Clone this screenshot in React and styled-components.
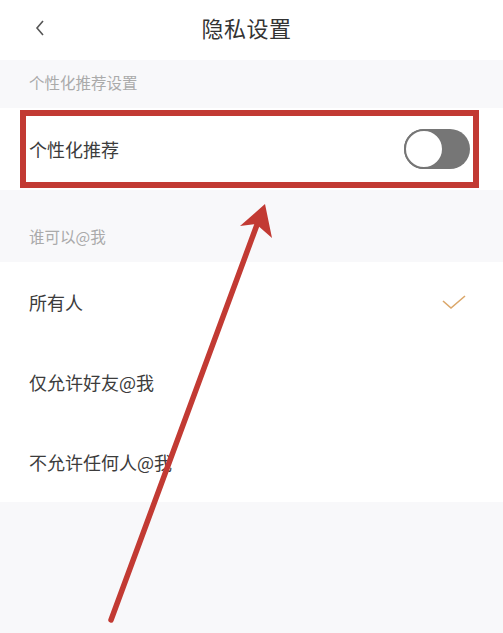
import styled, { createGlobalStyle } from 'styled-components';

const GlobalStyle = createGlobalStyle`
    html, body {
        margin: 0;
        padding: 0;
        background: #f8f8fa;
    }
    body {
        font-family: "Noto Sans CJK SC", "Noto Sans", sans-serif;
    }
`;

const Page = styled.div`
    position: relative;
    width: 503px;
    height: 633px;
    overflow: hidden;
    background: #f8f8fa;
`;

const Header = styled.header`
    height: 60px;
    background: #fff;
    display: flex;
    align-items: center;
    justify-content: center;
    position: relative;
`;

const BackButton = styled.div`
    position: absolute;
    left: 34px;
    top: 19px;
    width: 16px;
    height: 18px;
    display: flex;
    align-items: center;
`;

const Title = styled.h1`
    margin: -6px 10px 0 0;
    font-size: 22px;
    font-weight: 400;
    color: #333;
    letter-spacing: 0.5px;
`;

const SectionLabel = styled.div`
    height: ${({ $height }) => $height}px;
    box-sizing: border-box;
    display: flex;
    align-items: flex-end;
    padding: 0 29px 15px;
    font-size: 15.5px;
    color: #aaa;
`;

const List = styled.div`
    background: #fff;
`;

const Row = styled.div`
    height: ${({ $height }) => $height || 80}px;
    display: flex;
    align-items: center;
    justify-content: space-between;
    padding: 0 36px 0 29px;
    font-size: 18px;
    color: #3c3c3c;
    position: relative;
`;

const ToggleRow = styled(Row)`
    padding-right: 33px;
`;

const HighlightBox = styled.div`
    position: absolute;
    left: 20px;
    right: 24px;
    top: 2px;
    bottom: 2px;
    border: 6px solid #c23a33;
    pointer-events: none;
`;

const Toggle = styled.div`
    width: 66px;
    height: 40px;
    border-radius: 20px;
    background: #767676;
    position: relative;
`;

const Knob = styled.div`
    position: absolute;
    left: 0;
    top: 0;
    width: 40px;
    height: 40px;
    box-sizing: border-box;
    border-radius: 50%;
    background: #fff;
    border: 2px solid #767676;
`;

const Overlay = styled.svg`
    position: absolute;
    left: 0;
    top: 0;
    pointer-events: none;
`;

const options = ['所有人', '仅允许好友@我', '不允许任何人@我'];

const App = () => {
    return (
        <Page>
            <GlobalStyle />
            <Header>
                <BackButton>
                    <svg width="12" height="18" viewBox="0 0 12 18">
                        <path d="M9 2 L3 9 L9 16" fill="none" stroke="#555" strokeWidth="1.6" />
                    </svg>
                </BackButton>
                <Title>隐私设置</Title>
            </Header>

            <SectionLabel $height={48}>个性化推荐设置</SectionLabel>
            <List>
                <ToggleRow $height={82}>
                    <span>个性化推荐</span>
                    <Toggle>
                        <Knob />
                    </Toggle>
                    <HighlightBox />
                </ToggleRow>
            </List>

            <SectionLabel $height={72}>谁可以@我</SectionLabel>
            <List>
                {options.map((label, i) => (
                    <Row key={label}>
                        <span>{label}</span>
                        {i === 0 && (
                            <svg width="26" height="18" viewBox="0 0 26 18">
                                <path d="M2 8 L10 15 L24 3" fill="none" stroke="#dba76a" strokeWidth="1.6" />
                            </svg>
                        )}
                    </Row>
                ))}
            </List>

            <Overlay width="503" height="633" viewBox="0 0 503 633">
                <line x1="111" y1="620" x2="258" y2="222" stroke="#c23a33" strokeWidth="5.5" strokeLinecap="round" />
                <polygon points="265,204 240,226 256,224 272,238" fill="#c23a33" />
            </Overlay>
        </Page>
    );
};

export default App;
